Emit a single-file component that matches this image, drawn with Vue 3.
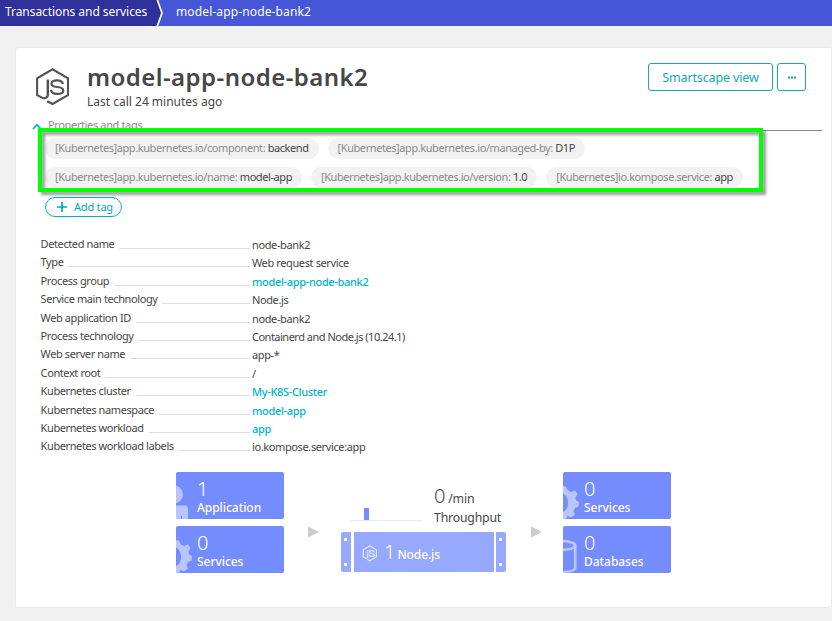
<script setup>
const tagRows = [
  [
    { k: '[Kubernetes]app.kubernetes.io/component:', v: 'backend' },
    { k: '[Kubernetes]app.kubernetes.io/managed-by:', v: 'D1P' },
  ],
  [
    { k: '[Kubernetes]app.kubernetes.io/name:', v: 'model-app' },
    { k: '[Kubernetes]app.kubernetes.io/version:', v: '1.0' },
    { k: '[Kubernetes]io.kompose.service:', v: 'app' },
  ],
]
const properties = [
  { k: 'Detected name', v: 'node-bank2' },
  { k: 'Type', v: 'Web request service' },
  { k: 'Process group', v: 'model-app-node-bank2', link: true },
  { k: 'Service main technology', v: 'Node.js' },
  { k: 'Web application ID', v: 'node-bank2' },
  { k: 'Process technology', v: 'Containerd and Node.js (10.24.1)', dense: true },
  { k: 'Web server name', v: 'app-*' },
  { k: 'Context root', v: '/' },
  { k: 'Kubernetes cluster', v: 'My-K8S-Cluster', link: true },
  { k: 'Kubernetes namespace', v: 'model-app', link: true },
  { k: 'Kubernetes workload', v: 'app', link: true },
  { k: 'Kubernetes workload labels', v: 'io.kompose.service:app' },
]
const callers = [
  { n: 1, label: 'Application', icon: 'user' },
  { n: 0, label: 'Services', icon: 'gear' },
]
const callees = [
  { n: 0, label: 'Services', icon: 'gear' },
  { n: 0, label: 'Databases', icon: 'db' },
]
</script>

<template>
  <div class="page">
    <nav class="crumbs">
      <span class="crumb first">Transactions and services</span>
      <svg class="sep" width="10" height="26" viewBox="0 0 10 26">
        <path d="M0 0H1L6 13L1 26H0Z" fill="#30309b" />
        <path d="M1 -1L6 13L1 27" fill="none" stroke="#fff" stroke-width="1.7" />
      </svg>
      <span class="crumb second">model-app-node-bank2</span>
    </nav>

    <main class="card">
      <header class="head">
        <svg class="logo" width="36" height="40" viewBox="0 0 36 40">
          <g fill="none" stroke="#545454" stroke-width="2.1">
            <path d="M8.5 31.4L2.1 28.2V11.3L17.5 2.3L33 11.3V28.2L17.5 37L12.2 34.2" />
            <path d="M12.8 12.5V27.5Q12.8 31.3 8.3 31.2" stroke-width="2.4" />
            <path d="M28 17.1Q27.2 13.3 22.2 13.3Q16.5 13.3 16.5 16.7Q16.5 19.4 22 20Q28.3 20.6 28.3 23.4Q28.3 26.8 22.2 26.8Q16.4 26.8 16 22.8" stroke-width="2.2" />
          </g>
        </svg>
        <div class="titles">
          <h1>model-app-node-bank2</h1>
          <p>Last call 24 minutes ago</p>
        </div>
        <div class="actions">
          <button class="btn wide">Smartscape view</button>
          <button class="btn more" aria-label="More">
            <svg width="10" height="3" viewBox="0 0 10 3"><path d="M1 .5h2v2H1zM4 .5h2v2h-2zM7 .5h2v2h-2z" fill="#16a6b6" /></svg>
          </button>
        </div>
      </header>

      <section class="props">
        <div class="section-title">
          <svg width="10" height="7" viewBox="0 0 10 7"><path d="M1 6L5 1.8L9 6" fill="none" stroke="#00b4cc" stroke-width="1.7" /></svg>
          <span>Properties and tags</span>
          <i></i>
        </div>
        <div class="tags">
          <div v-for="(row, i) in tagRows" :key="i" class="tag-row">
            <span v-for="t in row" :key="t.k" class="tag">{{ t.k }} <b>{{ t.v }}</b></span>
          </div>
          <div class="highlight"></div>
        </div>
        <button class="add">
          <svg width="12" height="12" viewBox="0 0 12 12"><path d="M6 1V11M1 6H11" stroke="#00a9bd" stroke-width="1.7" /></svg>
          <span>Add tag</span>
        </button>
        <dl class="list">
          <div v-for="p in properties" :key="p.k" class="row">
            <dt><span>{{ p.k }}</span><i></i></dt>
            <dd :class="{ link: p.link, dense: p.dense }">{{ p.v }}</dd>
          </div>
        </dl>
      </section>

      <section class="flow">
        <template v-for="(group, g) in [callers, null, callees]" :key="g">
          <svg v-if="g > 0" class="arrow" width="11" height="12" viewBox="0 0 11 12"><path d="M0 .5L11 6L0 11.5Z" fill="#ccc" /></svg>
          <div v-if="group" class="stack">
            <div v-for="b in group" :key="b.label" class="box">
              <svg class="box-icon" width="17" height="47" viewBox="0 0 17 47" fill="#b9c5ff">
                <template v-if="b.icon === 'user'">
                  <circle cx="-2" cy="22.5" r="9" />
                  <path d="M0 33.5H9Q12 33.5 12 37V47H0Z" />
                  <path d="M5.5 44V47" stroke="#758cff" stroke-width="1" />
                </template>
                <path v-else-if="b.icon === 'gear'" fill-rule="evenodd" d="M0 14L3 14.5L4.5 18L8 20L12 18.5L14.5 22L12.5 25.5L13 28.5L16 30L15.5 34.5L12 36L10.5 39L12 42.5L8 45.5L4.5 44L3 47H0V40Q5 38 5 31Q5 24 0 21.5Z" />
                <g v-else fill="none" stroke="#b9c5ff" stroke-width="2.7">
                  <ellipse cx="0" cy="19.5" rx="12.2" ry="4.3" />
                  <path d="M12.2 19V42Q12 45.5 0 46" />
                </g>
              </svg>
              <strong>{{ b.n }}</strong>
              <span>{{ b.label }}</span>
            </div>
          </div>
          <div v-else class="center">
            <div class="throughput">
              <div class="spark"><i></i></div>
              <div class="rate">
                <div><strong>0</strong> /min</div>
                <div>Throughput</div>
              </div>
            </div>
            <div class="node">
              <div class="rail"><i></i><i></i></div>
              <div class="node-body">
                <svg width="16" height="17" viewBox="0 0 36 40">
                  <g fill="none" stroke="#e4e9ff" stroke-width="2.7">
                    <path d="M8.5 31.4L2.1 28.2V11.3L17.5 2.3L33 11.3V28.2L17.5 37L12.2 34.2" />
                    <path d="M12.8 12.5V27.5Q12.8 31.3 8.3 31.2" />
                    <path d="M28 17.1Q27.2 13.3 22.2 13.3Q16.5 13.3 16.5 16.7Q16.5 19.4 22 20Q28.3 20.6 28.3 23.4Q28.3 26.8 22.2 26.8Q16.4 26.8 16 22.8" />
                  </g>
                </svg>
                <strong>1</strong><span>Node.js</span>
              </div>
              <div class="rail right"><i></i><i></i></div>
            </div>
          </div>
        </template>
      </section>
    </main>
  </div>
</template>

<style>
body { background: #f1f1f1; overflow: hidden; }
</style>
<style scoped>
* { box-sizing: border-box; }
.page { width: 832px; height: 621px; background: #f1f1f1; color: #454646; font-family: "Noto Sans", "Open Sans", sans-serif; }
.crumbs { display: flex; height: 26px; background: #4556d7; color: #fff; font-size: 12px; line-height: 24px; white-space: nowrap; }
.crumb.first { width: 156px; padding-left: 5px; background: #30309b; letter-spacing: -.06px; }
.sep { flex: none; }
.crumb.second { padding-left: 10px; letter-spacing: .13px; }
.card { width: 815px; height: 559px; margin: 22px 0 0 16px; background: #fff; box-shadow: 0 0 1px 1px #e9e9e9; border-radius: 2px; }
.head { display: flex; height: 70px; padding-left: 19px; padding-right: 25px; }
.logo { margin-top: 19px; flex: none; }
.titles { margin-left: 16px; margin-top: 12px; flex: 1; white-space: nowrap; }
h1 { margin: 0; font-size: 24px; line-height: 34px; font-weight: 600; letter-spacing: .45px; }
p { margin: 0; font-size: 12px; line-height: 16px; }
.actions { display: flex; gap: 4px; margin-top: 15px; }
.btn { height: 28px; padding: 0; border: 1px solid #16a6b6; border-radius: 3px; background: #fff; color: #16a6b6; font: 12.5px/26px "Noto Sans", sans-serif; }
.wide { width: 125px; letter-spacing: -.13px; padding-top: 1px; line-height: 25px; }
.more { width: 29px; display: flex; align-items: center; justify-content: center; }
.section-title { display: flex; height: 20px; padding: 0 9px 0 16px; align-items: center; font-size: 11px; line-height: 15px; color: #8b8b8b; white-space: nowrap; }
.section-title svg { margin-top: -3px; }
.section-title span { margin-left: 6px; margin-top: -7px; letter-spacing: -.36px; }
.section-title i { flex: 1; height: 1px; background: #888; margin: 5px 0 0 8px; }
.tags { position: relative; padding-left: 29px; height: 59px; }
.tag-row { display: flex; gap: 9px; height: 21px; margin-bottom: 8px; }
.tag { height: 21px; padding: 0 10px; border-radius: 11px; background: #f2f2f2; font-size: 11px; line-height: 20px; color: #8a8a8a; white-space: nowrap; letter-spacing: -.42px; }
.tag b { font-weight: 400; color: #454646; }
.highlight { position: absolute; left: 22px; top: -10px; width: 725px; height: 64px; border: 4px solid #0f0; filter: drop-shadow(3px 3px 1.5px rgba(0,0,0,.4)); }
.add { display: flex; align-items: center; width: 77px; height: 20px; margin-left: 29px; padding: 0 0 0 10px; border: 1px solid #00b4cc; border-radius: 10px; background: #fff; color: #00a9bd; font: 11px/17px "Noto Sans", sans-serif; letter-spacing: -.2px; }
.add span { margin-left: 6px; padding-bottom: 1px; }
.list { margin: 18px 0 0 24.6px; font-size: 11px; }
.row { display: flex; height: 18.4px; line-height: 18px; white-space: nowrap; }
dt { display: flex; width: 209.4px; letter-spacing: -.4px; }
dt i { flex: 1; height: 1px; background: #ddd; margin: 13px 0 0 5px; }
dd { margin: 1px 0 0 2px; letter-spacing: -.38px; }
.dense { letter-spacing: -.5px; }
.link { color: #00b4cc; font-weight: 500; letter-spacing: -.33px; }
.flow { display: flex; margin: 16px 0 0 160px; height: 101px; }
.stack { width: 108px; display: flex; flex-direction: column; gap: 7px; }
.box { position: relative; height: 47px; padding: 5px 0 0 21px; background: #758cff; color: #fff; border-radius: 2px; font-size: 12px; line-height: 16px; overflow: hidden; font-weight: 500; }
.box-icon { position: absolute; left: 0; top: 0; }
.box strong { display: block; font-size: 20px; line-height: 23px; font-weight: 300; }
.box span { display: block; letter-spacing: -.05px; }
.arrow { margin: 54px 21px 0 24px; flex: none; }
.center { width: 165px; margin: 0 1px; }
.throughput { display: flex; height: 60px; }
.spark { width: 72px; height: 49px; margin-left: 9px; border-bottom: 1px solid #e5e8ff; display: flex; align-items: flex-end; }
.spark i { width: 5px; height: 12px; margin-left: 14px; background: #758cff; }
.rate { margin: 14px 0 0 12px; font-size: 12.3px; line-height: 20px; white-space: nowrap; letter-spacing: -.2px; }
.rate div { height: 22px; }
.rate strong { font-size: 20px; font-weight: 300; }
.node { display: flex; height: 40px; }
.rail { width: 10px; background: #97a8ff; padding: 6px 0 6px 3px; display: flex; flex-direction: column; justify-content: space-between; border-radius: 2px 0 0 2px; }
.rail i { width: 3px; height: 3px; background: #fff; }
.rail.right { border-radius: 0 2px 2px 0; }
.node-body { width: 141px; margin: 0 2px 0 3px; padding-left: 8px; background: #97a8ff; color: #fff; display: flex; align-items: center; font-size: 12px; font-weight: 500; }
.node-body svg { margin-top: 4px; }
.node-body strong { font-size: 20px; font-weight: 300; margin-left: 6px; }
.node-body span { margin-left: 2px; margin-top: 5px; letter-spacing: -.1px; }
</style>
